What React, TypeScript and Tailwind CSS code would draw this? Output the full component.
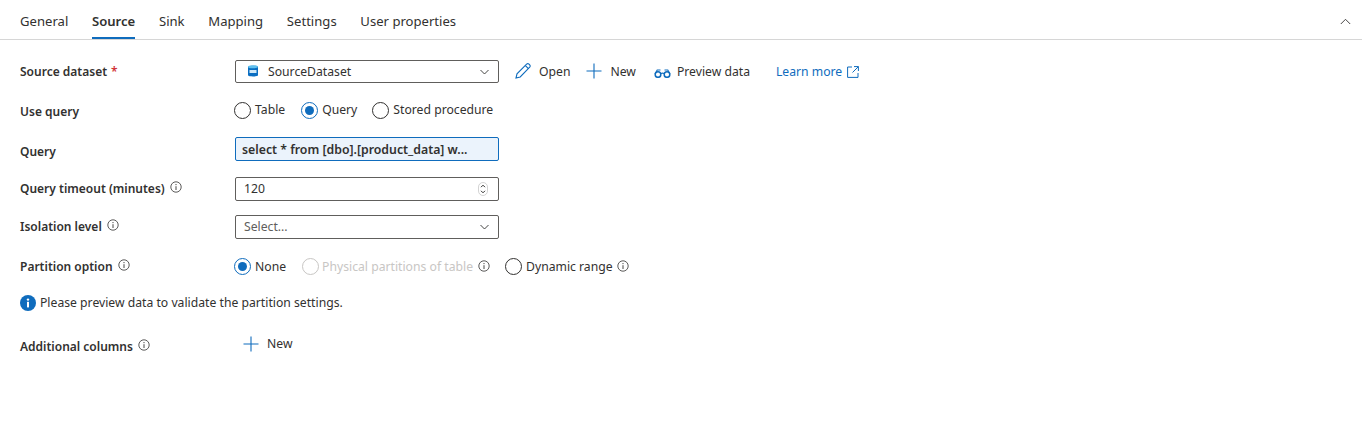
import React from "react";

const F = "font-['Noto_Sans',sans-serif]";

function Info({ className = "" }: { className?: string }) {
  return (
    <svg width="12" height="12" viewBox="0 0 12 12" fill="none" className={className}>
      <circle cx="6" cy="6" r="5.2" stroke="#323130" strokeWidth="0.8" />
      <path d="M6 5.2V9" stroke="#323130" strokeWidth="0.9" />
      <circle cx="6" cy="3.6" r="0.6" fill="#323130" />
    </svg>
  );
}

function Radio({ checked, disabled }: { checked?: boolean; disabled?: boolean }) {
  return (
    <span
      className={`flex h-[17px] w-[17px] shrink-0 items-center justify-center rounded-full border ${
        checked ? "border-[#0f6cbd]" : disabled ? "border-[#c8c6c4]" : "border-[#323130]"
      }`}
    >
      {checked && <span className="h-[9px] w-[9px] rounded-full bg-[#0f6cbd]" />}
    </span>
  );
}

function Plus() {
  return (
    <svg width="16" height="16" viewBox="0 0 16 16" fill="none">
      <path d="M8 0.5V15.5M0.5 8H15.5" stroke="#0f6cbd" strokeWidth="1.1" />
    </svg>
  );
}

function Chevron() {
  return (
    <svg width="9" height="6" viewBox="0 0 9 6" fill="none">
      <path d="M0.5 1L4.5 5L8.5 1" stroke="#323130" strokeWidth="0.9" />
    </svg>
  );
}

function Row({ label, info, star, h, mt, lift = 0, children }: any) {
  return (
    <div className="flex items-center" style={{ height: h, marginTop: mt }}>
      <div
        className="flex w-[235px] shrink-0 items-center pl-5 text-[12px] font-semibold text-[#323130]"
        style={{ transform: lift ? `translateY(${lift}px)` : undefined }}
      >
        {label}
        {star && <span className="ml-1 text-[#d13438]">*</span>}
        {info && <Info className="relative top-[-2px] ml-[5px]" />}
      </div>
      {children}
    </div>
  );
}

export default function App() {
  const tabs = ["General", "Source", "Sink", "Mapping", "Settings", "User properties"];
  return (
    <div className={`${F} h-[431px] w-[1362px] overflow-hidden bg-white text-[12.2px] text-[#323130]`}>
      <div className="flex h-10 items-stretch justify-between border-b border-[#d6d6d6] pl-5 pr-[11px]">
        <div className="flex gap-[23.7px]">
          {tabs.map((t) => (
            <div
              key={t}
              className={`flex items-center border-b-2 pt-[7px] text-[13.1px] ${
                t === "Source" ? "border-[#0f6cbd] font-semibold text-[#323130]" : "border-transparent"
              }`}
            >
              {t}
            </div>
          ))}
        </div>
        <div className="flex items-center pt-[3px]">
          <svg width="11" height="7" viewBox="0 0 11 7" fill="none">
            <path d="M0.8 6L5.5 1.3L10.2 6" stroke="#323130" strokeWidth="0.9" />
          </svg>
        </div>
      </div>

      <Row label="Source dataset" star h={23} mt={20} lift={0}>
        <div className="flex h-[23px] w-[264px] items-center justify-between rounded-[2px] border border-[#605e5c] pl-3 pr-[9px]">
          <div className="flex items-center gap-[10px]">
            <svg width="10" height="12" viewBox="0 0 10 12">
              <path d="M0 1.8C0 0.3 10 0.3 10 1.8V10.2C10 11.8 0 11.8 0 10.2Z" fill="#0a6ec2" />
              <ellipse cx="5" cy="1.8" rx="5" ry="1.5" fill="#5fc0ee" />
              <rect x="1.5" y="5" width="7" height="3" fill="#cfe8f8" />
            </svg>
            <span className="relative top-px">SourceDataset</span>
          </div>
          <Chevron />
        </div>
        <div className="ml-4 flex items-center gap-2">
          <svg width="16" height="16" viewBox="0 0 16 16" fill="none">
            <path d="M1 15L2 10.8L11.6 1.2C12.3 0.6 13.3 0.6 14 1.2L14.7 1.9C15.3 2.6 15.3 3.5 14.7 4.2L5.2 14Z" stroke="#0f6cbd" strokeWidth="1.1" />
            <path d="M10.4 2.6L13.4 5.6" stroke="#0f6cbd" strokeWidth="1.1" />
          </svg>
          <span className="relative top-px">Open</span>
        </div>
        <div className="ml-4 flex items-center gap-[8px]">
          <Plus />
          <span className="relative top-px">New</span>
        </div>
        <div className="ml-[18px] flex items-center gap-[6px]">
          <svg width="17" height="9" viewBox="0 0 17 9" fill="none" className="relative top-[2px]">
            <circle cx="4" cy="5.5" r="2.8" stroke="#0f6cbd" strokeWidth="1.5" />
            <circle cx="13" cy="5.5" r="2.8" stroke="#0f6cbd" strokeWidth="1.5" />
            <path d="M6.8 4.6C7.8 4 9.2 4 10.2 4.6M1 5L3.2 1H6.5M16 5L13.8 1H10.5" stroke="#0f6cbd" strokeWidth="1.1" />
          </svg>
          <span className="relative top-px">Preview data</span>
        </div>
        <div className="ml-[26px] flex items-center gap-[5px] text-[#0f6cbd]">
          <span className="relative top-px">Learn more</span>
          <svg width="12" height="12" viewBox="0 0 12 12" fill="none" className="relative top-px">
            <path d="M5 1H0.6V11.4H11V7M7 0.6H11.4V5M11.4 0.6L5.5 6.5" stroke="#0f6cbd" strokeWidth="1" />
          </svg>
        </div>
      </Row>

      <Row label="Use query" h={18} mt={18} lift={2}>
        <div className="flex items-center">
          <span className="ml-[-1px]"><Radio /></span>
          <span className="ml-[4px]">Table</span>
          <span className="ml-4"><Radio checked /></span>
          <span className="ml-[4px]">Query</span>
          <span className="ml-[15px]"><Radio /></span>
          <span className="ml-[4px]">Stored procedure</span>
        </div>
      </Row>

      <Row label="Query" h={24} mt={18} lift={3}>
        <div className="flex h-6 w-[264px] items-center rounded-[2px] border border-[#0f6cbd] bg-[#ebf3fc] px-[6px] text-[12.3px] font-semibold">
          <span className="relative top-px">select * from [dbo].[product_data] w...</span>
        </div>
      </Row>

      <Row label="Query timeout (minutes)" info h={24} mt={16}>
        <div className="flex h-6 w-[264px] items-center justify-between rounded-[2px] border border-[#605e5c] pl-[8px] pr-[10px]">
          <span>120</span>
          <svg width="10" height="14" viewBox="0 0 10 14" fill="none">
            <rect x="0.5" y="0.5" width="9" height="13" rx="4.5" stroke="#c8c8c8" strokeWidth="0.8" />
            <path d="M3 5.2L5 3.2L7 5.2M3 8.8L5 10.8L7 8.8" stroke="#323130" strokeWidth="1" />
          </svg>
        </div>
      </Row>

      <Row label="Isolation level" info h={24} mt={14}>
        <div className="flex h-6 w-[264px] items-center justify-between rounded-[2px] border border-[#605e5c] pl-[8px] pr-[9px]">
          <span className="text-[#605e5c]">Select...</span>
          <Chevron />
        </div>
      </Row>

      <Row label="Partition option" info h={18} mt={18} lift={1}>
        <div className="flex items-center">
          <span className="ml-[-1px]"><Radio checked /></span>
          <span className="relative top-px ml-[4px]">None</span>
          <span className="ml-4"><Radio disabled /></span>
          <span className="relative top-px ml-[3px] text-[#c8c6c4]">Physical partitions of table</span>
          <Info className="ml-[5px]" />
          <span className="ml-[15px]"><Radio /></span>
          <span className="relative top-px ml-[4px]">Dynamic range</span>
          <Info className="ml-[4px]" />
        </div>
      </Row>

      <div className="mt-[18px] flex h-5 items-center gap-1 pl-5">
        <svg width="16" height="16" viewBox="0 0 16 16">
          <circle cx="8" cy="8" r="8" fill="#0f6cbd" />
          <rect x="7" y="6.8" width="2" height="5.6" fill="#fff" />
          <circle cx="8" cy="4.6" r="1.2" fill="#fff" />
        </svg>
        <span>Please preview data to validate the partition settings.</span>
      </div>

      <Row label="Additional columns" info h={20} mt={21} lift={3}>
        <div className="ml-2 flex items-center gap-2">
          <Plus />
          <span>New</span>
        </div>
      </Row>
    </div>
  );
}
